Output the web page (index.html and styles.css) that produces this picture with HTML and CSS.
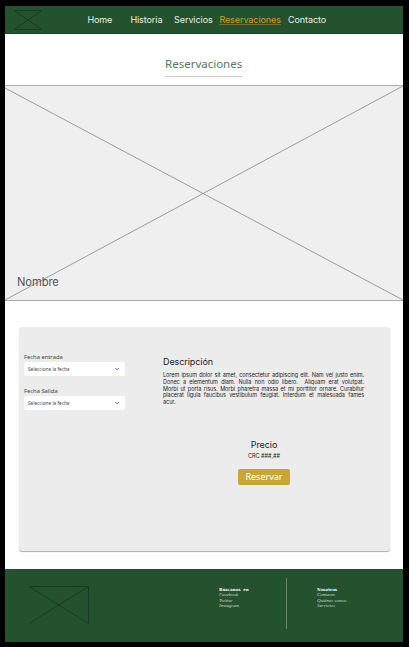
FILE: index.html
```
<!DOCTYPE html>
<html lang="es">
<head>
<meta charset="utf-8">
<title>Reservaciones</title>
<link rel="stylesheet" href="styles.css">
</head>
<body>
<div class="page">
  <header class="header">
    <svg class="logo" width="30" height="22" viewBox="0 0 30 22"><path d="M1 1.5H29M1 20.5H29M1 1.5L29 20.5M29 1.5L1 20.5"/></svg>
    <nav class="nav">
      <a>Home</a><a>Historia</a><a>Servicios</a><a class="active">Reservaciones</a><a>Contacto</a>
    </nav>
  </header>
  <div class="title"><h1>Reservaciones</h1></div>
  <section class="hero">
    <svg class="cross" width="398" height="216" viewBox="0 0 398 216"><path d="M0 3L398 215M398 1L0 215"/></svg>
    <h2>Nombre</h2>
  </section>
  <main class="card">
    <form class="dates">
      <label>Fecha entrada</label>
      <div class="select"><span>Seleccione la fecha</span><svg width="4" height="4" viewBox="0 0 4 4"><path d="M.3 1L2 2.9L3.7 1"/></svg></div>
      <label>Fecha Salida</label>
      <div class="select"><span>Seleccione la fecha</span><svg width="4" height="4" viewBox="0 0 4 4"><path d="M.3 1L2 2.9L3.7 1"/></svg></div>
    </form>
    <section class="details">
      <h3>Descripción</h3>
      <p class="text">
        <span>Lorem ipsum dolor sit amet, consectetur adipiscing elit. Nam vel justo enim.</span>
        <span>Donec a elementum diam. Nulla non odio libero. &nbsp;Aliquam erat volutpat.</span>
        <span>Morbi ut porta risus. Morbi pharetra massa et mi porttitor ornare. Curabitur</span>
        <span>placerat ligula faucibus vestibulum feugiat. Interdum et malesuada fames</span>
        <span class="last">acur.</span>
      </p>
      <div class="price">
        <h3>Precio</h3>
        <p>CRC ###,##</p>
        <div class="button">Reservar</div>
      </div>
    </section>
  </main>
  <footer class="footer">
    <svg class="mark" width="62" height="40" viewBox="0 0 62 40"><path d="M1 1.5H60.5V38.5L1 1.5M60.5 1.5L1 38.5"/></svg>
    <div class="links social"><b>Búscanos &nbsp;en</b><a>Facebook</a><a>Twitter</a><a>Instagram</a></div>
    <div class="divider"></div>
    <div class="links"><b>Nosotros</b><a>Contacto</a><a>Quiénes somos</a><a>Servicios</a></div>
  </footer>
</div>
</body>
</html>
```
FILE: styles.css
```
* { box-sizing: border-box; margin: 0; padding: 0; }
body { background: #000; font-family: Inter, "Liberation Sans", sans-serif; padding: 6px 6px 5px 5px; }
svg { display: block; fill: none; }
h1, h2, h3 { font-weight: 400; }
.page { width: 398px; height: 636px; background: #fff; display: flex; flex-direction: column; overflow: hidden; }
.header { height: 28px; background: #24512e; display: flex; border-bottom: 1px solid #1c4426; }
.logo { margin: 3px 0 0 8px; stroke: #17351d; stroke-width: .8; }
.nav { display: grid; grid-template-columns: 43px 43.7px 45.3px 68.7px 60px; margin-left: 44.4px; align-items: start; padding-top: 8px; color: #e8efe9; font-size: 9px; letter-spacing: -.08px; line-height: 12px; white-space: nowrap; }
.nav .active { color: #c8a02e; justify-self: start; height: 11px; border-bottom: 1px solid #776f2c; }
.title { height: 51px; display: flex; justify-content: center; align-items: flex-start; padding-top: 21px; }
.title h1 { width: 77px; height: 22px; margin-right: 1px; border-bottom: 1px solid #c9cdc9; font: 400 11.5px/18px "Noto Sans", sans-serif; color: #5b765f; white-space: nowrap; }
.hero { height: 216px; background: #efefef; border-top: 1px solid #a9b0a9; border-bottom: 1px solid #aaa; position: relative; display: flex; align-items: flex-end; padding: 0 0 10px 12px; }
.cross { position: absolute; left: 0; top: -1px; stroke: #888; stroke-width: .8; }
.hero h2 { font-size: 11.2px; letter-spacing: -.1px; line-height: 16px; color: #555; position: relative; }
.card { width: 371px; height: 224px; margin: 26px 0 0 14px; background: #ececec; border-radius: 3px; box-shadow: 0 1px 1px #aaa; display: flex; }
.dates { width: 106px; padding: 25px 0 0 5px; font-family: "Noto Sans", sans-serif; }
.dates label { display: block; height: 10px; font-size: 5.8px; line-height: 10px; color: #444; }
.select { width: 101px; height: 14px; background: #fff; border-radius: 2px; margin-bottom: 10px; padding: 0 6px 0 4px; display: flex; align-items: center; justify-content: space-between; font-size: 4.7px; color: #444; }
.select svg { stroke: #7468f0; stroke-width: 1; }
.details { width: 202px; margin-left: 38px; padding-top: 29px; color: #222; }
.details h3 { font-size: 9px; letter-spacing: -.08px; line-height: 12px; }
.text { font-size: 5.5px; letter-spacing: -.04px; line-height: 6.75px; margin-top: 4px; }
.text span { display: block; width: 201px; text-align: justify; text-align-last: justify; white-space: normal; }
.text .last { text-align-last: left; }
.price { display: flex; flex-direction: column; align-items: center; margin-top: 33px; }
.price p { font-size: 5.5px; line-height: 8px; margin-top: 1px; }
.button { width: 52px; height: 16px; margin-top: 9px; border-radius: 2px; background: #c8a535; color: #fff; font: 9px/16px "Noto Sans", sans-serif; text-align: center; }
.footer { height: 73px; margin-top: auto; background: #24512e; display: flex; }
.mark { margin: 16px 0 0 23px; stroke: #17351d; stroke-width: .8; }
.links { padding-top: 17.5px; display: flex; flex-direction: column; font: italic 4.9px/5.6px "Liberation Serif", serif; color: #d0dbd2; white-space: nowrap; }
.links b { font-style: normal; color: #fff; font-family: "DejaVu Serif", serif; font-size: 4px; }
.social { width: 67px; margin-left: 129px; }
.divider { width: 1px; height: 51px; margin: 9px 30px 0 0; background: #66866c; }
```
